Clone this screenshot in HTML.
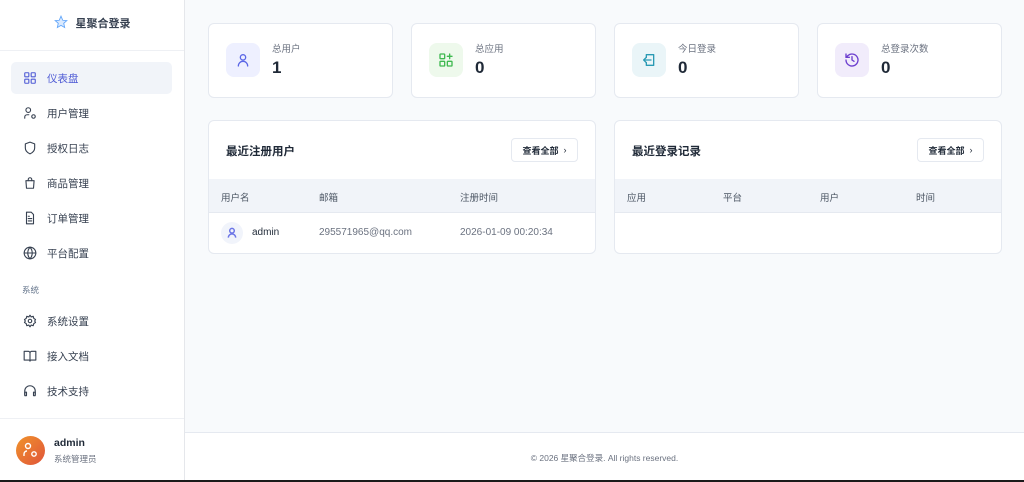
<!DOCTYPE html>
<html><head><meta charset="utf-8"><style>
*{box-sizing:border-box;margin:0;padding:0}
body{width:1024px;height:482px;overflow:hidden;background:#1a1a1a;font-family:"Liberation Sans","Noto Sans CJK SC",sans-serif;color:#334155;position:relative}
.app{position:absolute;left:0;top:0;width:1024px;height:480px;background:#f8fafc}
.side{position:absolute;left:0;top:0;width:185px;height:480px;background:#fff;border-right:1px solid #e5e7eb}
.logo{height:51px;border-bottom:1px solid #eef0f4;display:flex;justify-content:center;padding-top:15px;font-size:11px;font-weight:bold;color:#374151;gap:8px}
.nav{position:absolute;left:11px;width:161px;height:32px;border-radius:5px;display:flex;align-items:center;padding-left:12px;font-size:10.5px;color:#374151;gap:10px}
.nav.act{background:#f1f4f9;color:#4f5bd5}
.nav svg{width:14px;height:14px;fill:none;stroke:currentColor;stroke-width:1.9;stroke-linecap:round;stroke-linejoin:round}
.sec{position:absolute;left:22px;top:284px;font-size:8.5px;color:#64748b}
.user{position:absolute;left:0;top:418px;width:184px;height:62px;border-top:1px solid #eef0f4}
.av{position:absolute;left:16px;top:17px;width:29px;height:29px;border-radius:50%;background:linear-gradient(135deg,#f0932b,#e0543a)}
.card{position:absolute;top:23px;width:185px;height:75px;background:#fff;border:1px solid #e5e9f0;border-radius:6px}
.ic{position:absolute;left:17px;top:19px;width:34px;height:34px;border-radius:8px;display:flex;align-items:center;justify-content:center}
.ic svg{width:16px;height:16px;fill:none;stroke-width:2;stroke-linecap:round;stroke-linejoin:round}
.cl{position:absolute;left:63px;top:17px;font-size:9.5px;color:#6b7280}
.cv{position:absolute;left:63px;top:34px;font-size:17px;font-weight:bold;color:#1f2937}
.panel{position:absolute;top:120px;width:388px;height:134px;background:#fff;border:1px solid #e5e9f0;border-radius:6px;overflow:hidden}
.pt{position:absolute;left:17px;top:22px;font-size:11.5px;font-weight:bold;color:#1f2937}
.btn{position:absolute;right:17px;top:17px;width:67px;height:24px;border:1px solid #e5e9f0;border-radius:4px;font-size:9px;color:#1f2937;display:flex;align-items:center;justify-content:center;gap:5px;font-weight:bold}
.th{position:absolute;left:0;top:58px;width:100%;height:34px;background:#f1f4f9;border-bottom:1px solid #e5e9f0;font-size:9.5px;color:#4b5563}
.th span,.tr span{position:absolute;top:11px}
.tr{position:absolute;left:0;top:92px;width:100%;height:41px;font-size:10px;color:#6b7280}
.tr span{top:14px}
.foot{position:absolute;left:185px;top:432px;width:839px;height:48px;background:#fff;border-top:1px solid #e5e9f0;text-align:center;font-size:8.5px;color:#6b7280;padding-top:19px}
</style></head><body>
<div class="app">
<div class="side">
<div class="logo"><svg width="14" height="14" viewBox="0 0 24 24"><path d="M12 2l3 7 7 .6-5.3 4.6 1.6 7.3L12 17.8 5.7 21.5l1.6-7.3L2 9.6 9 9z" fill="#dbeafe" stroke="#60a5fa" stroke-width="1.5"/></svg>星聚合登录</div>
<div class="nav act" style="top:62px"><svg viewBox="0 0 24 24"><rect x="3" y="3" width="7" height="7" rx="1"/><rect x="14" y="3" width="7" height="7" rx="1"/><rect x="3" y="14" width="7" height="7" rx="1"/><rect x="14" y="14" width="7" height="7" rx="1"/></svg>仪表盘</div>
<div class="nav" style="top:97px"><svg viewBox="0 0 24 24"><circle cx="9" cy="7" r="4"/><path d="M3 21v-2a4 4 0 0 1 4-4h3"/><circle cx="18" cy="18" r="3"/></svg>用户管理</div>
<div class="nav" style="top:132px"><svg viewBox="0 0 24 24"><path d="M12 2l8 3v7c0 5-3.5 8-8 10-4.5-2-8-5-8-10V5z"/></svg>授权日志</div>
<div class="nav" style="top:167px"><svg viewBox="0 0 24 24"><path d="M5 8h14l-1 13H6z"/><path d="M9 8V6a3 3 0 0 1 6 0v2"/></svg>商品管理</div>
<div class="nav" style="top:202px"><svg viewBox="0 0 24 24"><path d="M14 2H6v20h12V6z"/><path d="M9 13h6M9 17h6M9 9h2"/></svg>订单管理</div>
<div class="nav" style="top:237px"><svg viewBox="0 0 24 24"><circle cx="12" cy="12" r="10"/><path d="M2 12h20M12 2a15 15 0 0 1 0 20M12 2a15 15 0 0 0 0 20"/></svg>平台配置</div>
<div class="sec">系统</div>
<div class="nav" style="top:305px"><svg viewBox="0 0 24 24"><circle cx="12" cy="12" r="3"/><path d="M12 2l2 3 3.5-1 1 3.5 3 2-1.5 2.5 1.5 2.5-3 2-1 3.5-3.5-1-2 3-2-3-3.5 1-1-3.5-3-2L4 12 2.5 9.5l3-2 1-3.5 3.5 1z"/></svg>系统设置</div>
<div class="nav" style="top:340px"><svg viewBox="0 0 24 24"><path d="M2 4h7a3 3 0 0 1 3 3v14a2 2 0 0 0-2-2H2zM22 4h-7a3 3 0 0 0-3 3v14a2 2 0 0 1 2-2h8z"/></svg>接入文档</div>
<div class="nav" style="top:375px"><svg viewBox="0 0 24 24"><path d="M3 18v-6a9 9 0 0 1 18 0v6"/><path d="M3 14h3v6H3zM18 14h3v6h-3z"/></svg>技术支持</div>
<div class="user"><div class="av"><svg width="29" height="29" viewBox="0 0 29 29" fill="none" stroke="#fff" stroke-width="1.4"><circle cx="12" cy="10" r="2.5"/><path d="M8 20v-2a3 3 0 0 1 3-3"/><circle cx="18" cy="18" r="2.2"/></svg></div>
<div style="position:absolute;left:54px;top:18px;font-size:10.5px;font-weight:bold;color:#1f2937">admin</div>
<div style="position:absolute;left:54px;top:34px;font-size:8.5px;color:#6b7280">系统管理员</div></div>
</div>

<div class="card" style="left:208px"><div class="ic" style="background:#eef0ff"><svg viewBox="0 0 24 24" stroke="#5b67e6"><circle cx="12" cy="8" r="4"/><path d="M5 21a7 7 0 0 1 14 0"/></svg></div><div class="cl">总用户</div><div class="cv">1</div></div>
<div class="card" style="left:411px"><div class="ic" style="background:#eef9ec"><svg viewBox="0 0 24 24" stroke="#3fb950"><rect x="3" y="3" width="7" height="7" rx="1"/><rect x="3" y="14" width="7" height="7" rx="1"/><rect x="14" y="14" width="7" height="7" rx="1"/><path d="M17.5 3v7M14 6.5h7"/></svg></div><div class="cl">总应用</div><div class="cv">0</div></div>
<div class="card" style="left:614px"><div class="ic" style="background:#eaf5f8"><svg viewBox="0 0 24 24" stroke="#2a9ab4"><path d="M8 4h11v16H8v-4M8 8V4"/><path d="M15 12H4M8 8l-4 4 4 4"/></svg></div><div class="cl">今日登录</div><div class="cv">0</div></div>
<div class="card" style="left:817px"><div class="ic" style="background:#f1ecfb"><svg viewBox="0 0 24 24" stroke="#6d3fcf"><path d="M3 12a9 9 0 1 0 3-6.7L3 8"/><path d="M3 3v5h5M12 7v5l3 2"/></svg></div><div class="cl">总登录次数</div><div class="cv">0</div></div>

<div class="panel" style="left:208px"><div class="pt">最近注册用户</div><div class="btn">查看全部 <span style="font-weight:normal">›</span></div>
<div class="th"><span style="left:12px">用户名</span><span style="left:110px">邮箱</span><span style="left:251px">注册时间</span></div>
<div class="tr"><div style="position:absolute;left:12px;top:9px;width:22px;height:22px;border-radius:50%;background:#f1f4fb"><svg width="22" height="22" viewBox="0 0 24 24" fill="none" stroke="#6b74e6" stroke-width="1.6"><circle cx="12" cy="9.5" r="2.5"/><path d="M8 17a4 4 0 0 1 8 0"/></svg></div><span style="left:43px;color:#1f2937">admin</span><span style="left:110px">295571965@qq.com</span><span style="left:251px">2026-01-09 00:20:34</span></div></div>

<div class="panel" style="left:614px"><div class="pt">最近登录记录</div><div class="btn">查看全部 <span style="font-weight:normal">›</span></div>
<div class="th"><span style="left:12px">应用</span><span style="left:108px">平台</span><span style="left:205px">用户</span><span style="left:301px">时间</span></div></div>

<div class="foot">© 2026 星聚合登录. All rights reserved.</div>
</div>
</body></html>
